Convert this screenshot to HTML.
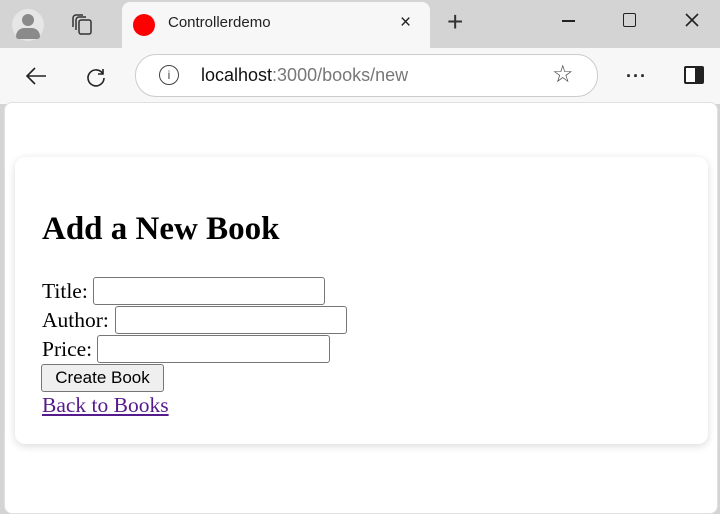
<!DOCTYPE html><html><head><style>
body{margin:0;width:720px;height:503px;overflow:hidden;background:#d4d4d4;font-family:"Liberation Sans",sans-serif;position:relative}
.a{position:absolute}
.t{font-family:"Liberation Serif",serif;font-size:21.5px;color:#000}
.in{position:absolute;height:26px;border:1px solid #767676;border-radius:3px;background:#fff}
</style></head><body>
<div class="a" style="left:12px;top:9px;width:32px;height:32px;border-radius:50%;background:#e6e6e6"></div>
<div class="a" style="left:22px;top:14px;width:12px;height:12px;border-radius:50%;background:#8a8a8a"></div>
<div class="a" style="left:16px;top:28px;width:24px;height:11px;border-radius:12px 12px 4px 4px;background:#8a8a8a"></div>
<svg class="a" style="left:70px;top:12px" width="26" height="26" viewBox="0 0 26 26" fill="none" stroke="#333" stroke-width="1.5"><rect x="9" y="8" width="12" height="14" rx="2"/><path d="M6 18V8a3 3 0 0 1 3-3h7M3 15V6a3 3 0 0 1 3-3h7"/></svg>
<div class="a" style="left:122px;top:2px;width:308px;height:50px;background:#f7f7f7;border-radius:8px 8px 0 0"></div>
<div class="a" style="left:133px;top:14px;width:22px;height:22px;border-radius:50%;background:#f00"></div>
<div class="a" style="left:168px;top:14px;font-size:15px;color:#222">Controllerdemo</div>
<div class="a" style="left:400px;top:12px;font-size:19px;color:#222">×</div>
<div class="a" style="left:447px;top:6px;font-size:28px;font-weight:300;color:#333">+</div>
<div class="a" style="left:562px;top:20px;width:13px;height:1.5px;background:#222"></div>
<div class="a" style="left:623px;top:13px;width:11px;height:12px;border:1.5px solid #222;border-radius:2px"></div>
<svg class="a" style="left:684px;top:12px" width="16" height="16" viewBox="0 0 16 16" stroke="#222" stroke-width="1.6"><path d="M2 2L14 14M14 2L2 14"/></svg>
<div class="a" style="left:0;top:48px;width:720px;height:56px;background:#f7f7f7"></div>
<svg class="a" style="left:24px;top:64px" width="24" height="24" viewBox="0 0 24 24" fill="none" stroke="#222" stroke-width="1.6"><path d="M22 12H3M11 4l-8 8 8 8"/></svg>
<svg class="a" style="left:84px;top:64px" width="24" height="24" viewBox="0 0 24 24" fill="none" stroke="#222" stroke-width="1.6"><path d="M19 5v5h-5M19 10A8 8 0 1 0 20 14"/></svg>
<div class="a" style="left:135px;top:54px;width:461px;height:41px;border:1px solid #ccc;border-radius:21px;background:#fff"></div>
<div class="a" style="left:159px;top:65px;width:18px;height:18px;border:1.5px solid #444;border-radius:50%;font-size:12px;text-align:center;line-height:18px;color:#444">i</div>
<div class="a" style="left:201px;top:65px;font-size:18px;color:#111">localhost<span style="color:#777">:3000/books/new</span></div>
<div class="a" style="left:552px;top:60px;font-size:24px;color:#444">☆</div>
<div class="a" style="left:626px;top:66px;font-size:18px;color:#222;letter-spacing:1px;font-weight:bold">···</div>
<div class="a" style="left:684px;top:66px;width:16px;height:14px;border:2px solid #222;border-radius:2px;background:linear-gradient(90deg,#fff 55%,#222 55%)"></div>
<div class="a" style="left:4px;top:102px;width:712px;height:410px;background:#fff;border:1px solid #e0e0e0;border-radius:8px"></div>
<div class="a" style="left:15px;top:157px;width:693px;height:287px;background:#fff;border-radius:10px;box-shadow:0 2px 8px rgba(0,0,0,.15)"></div>
<div class="a t" style="left:42px;top:211px;font-size:33px;font-weight:bold">Add a New Book</div>
<div class="a t" style="left:42px;top:279px">Title:</div>
<div class="in" style="left:93px;top:277px;width:230px"></div>
<div class="a t" style="left:42px;top:308px">Author:</div>
<div class="in" style="left:115px;top:306px;width:230px"></div>
<div class="a t" style="left:42px;top:337px">Price:</div>
<div class="in" style="left:97px;top:335px;width:231px"></div>
<div class="a" style="left:41px;top:364px;width:121px;height:26px;border:1px solid #767676;border-radius:3px;background:#efefef;font-size:17px;text-align:center;line-height:26px;color:#000">Create Book</div>
<div class="a t" style="left:42px;top:393px;color:#551a8b;text-decoration:underline">Back to Books</div>
</body></html>
